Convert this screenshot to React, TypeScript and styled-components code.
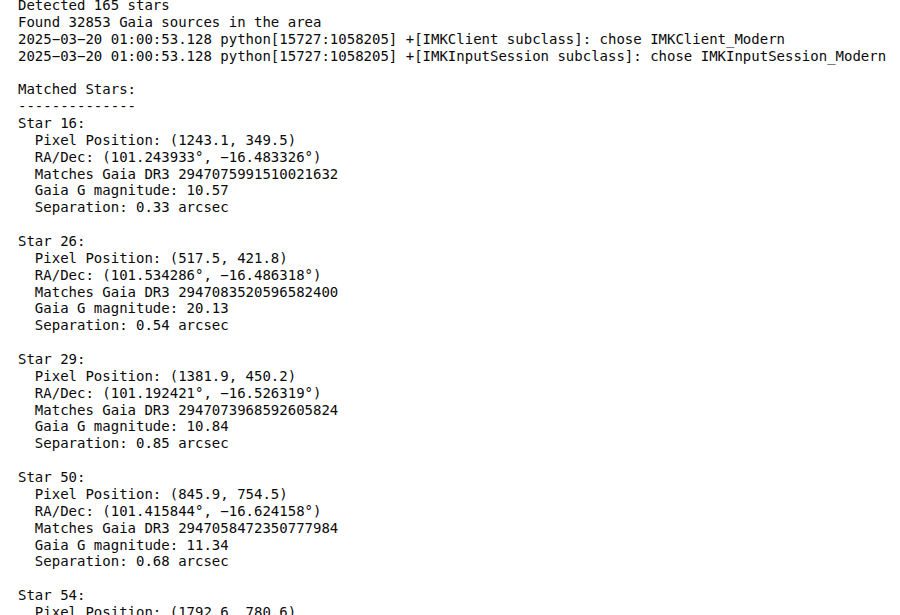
import React from "react";
import styled, { createGlobalStyle } from "styled-components";

const Global = createGlobalStyle`
  html, body { margin: 0; padding: 0; background: #ffffff; }
`;

const Terminal = styled.pre`
  margin: 0;
  padding: 0 0 0 18px;
  font-family: "DejaVu Sans Mono", "Liberation Mono", monospace;
  font-size: 14px;
  line-height: 16.86px;
  color: #0a0a0a;
  white-space: pre;
  position: relative;
  top: -3px;
`;

const stars = [
  { id: 16, pos: "(1243.1, 349.5)", radec: "(101.243933°, −16.483326°)", gaia: "2947075991510021632", g: "10.57", sep: "0.33" },
  { id: 26, pos: "(517.5, 421.8)", radec: "(101.534286°, −16.486318°)", gaia: "2947083520596582400", g: "20.13", sep: "0.54" },
  { id: 29, pos: "(1381.9, 450.2)", radec: "(101.192421°, −16.526319°)", gaia: "2947073968592605824", g: "10.84", sep: "0.85" },
  { id: 50, pos: "(845.9, 754.5)", radec: "(101.415844°, −16.624158°)", gaia: "2947058472350777984", g: "11.34", sep: "0.68" },
];

export default function App() {
  const lines: string[] = [
    "Detected 165 stars",
    "Found 32853 Gaia sources in the area",
    "2025−03−20 01:00:53.128 python[15727:1058205] +[IMKClient subclass]: chose IMKClient_Modern",
    "2025−03−20 01:00:53.128 python[15727:1058205] +[IMKInputSession subclass]: chose IMKInputSession_Modern",
    "",
    "Matched Stars:",
    "--------------",
  ];
  stars.forEach((s) => {
    lines.push(
      `Star ${s.id}:`,
      `  Pixel Position: ${s.pos}`,
      `  RA/Dec: ${s.radec}`,
      `  Matches Gaia DR3 ${s.gaia}`,
      `  Gaia G magnitude: ${s.g}`,
      `  Separation: ${s.sep} arcsec`,
      ""
    );
  });
  lines.push("Star 54:", "  Pixel Position: (1792.6, 780.6)");
  return (
    <>
      <Global />
      <Terminal>{lines.join("\n")}</Terminal>
    </>
  );
}
